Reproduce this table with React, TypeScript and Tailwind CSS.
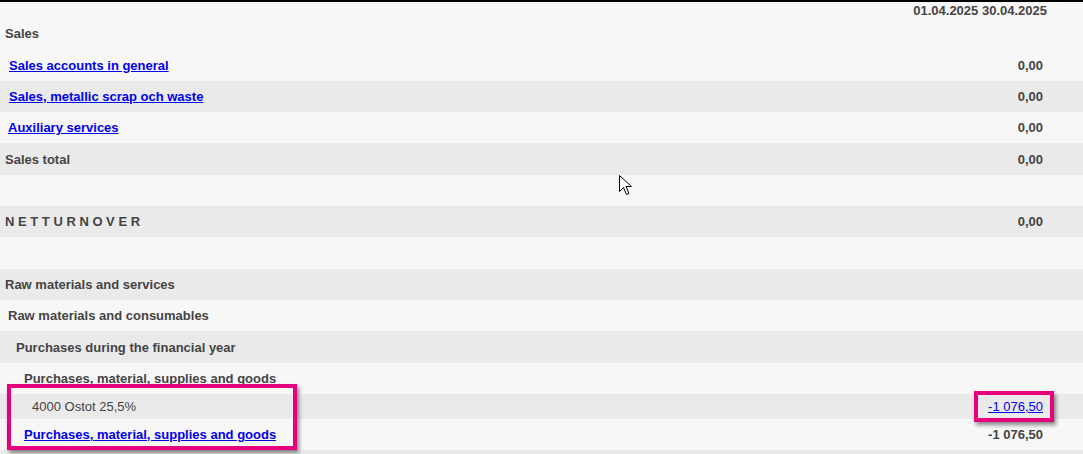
const rows = [
  { label: "Sales", kind: "head", pad: "pl-[5px]", h: "h-[31px]" },
  { label: "Sales accounts in general", kind: "link", pad: "pl-[9px]", value: "0,00", h: "h-[32px]" },
  { label: "Sales, metallic scrap och waste", kind: "link", pad: "pl-[9px]", value: "0,00", h: "h-[31px]" },
  { label: "Auxiliary services", kind: "link", pad: "pl-[8px]", value: "0,00", h: "h-[31px]" },
  { label: "Sales total", kind: "head", pad: "pl-[5px]", value: "0,00", h: "h-[32px]" },
  { label: "", kind: "head", pad: "pl-[5px]", h: "h-[31px]" },
  { label: "N E T T U R N O V E R", kind: "head", pad: "pl-[5px]", value: "0,00", h: "h-[31px]" },
  { label: "", kind: "head", pad: "pl-[5px]", h: "h-[32px]" },
  { label: "Raw materials and services", kind: "head", pad: "pl-[5px]", h: "h-[31px]" },
  { label: "Raw materials and consumables", kind: "head", pad: "pl-[8px]", h: "h-[31px]" },
  { label: "Purchases during the financial year", kind: "head", pad: "pl-[16px]", h: "h-[32px]" },
  { label: "Purchases, material, supplies and goods", kind: "head", pad: "pl-[24px]", h: "h-[31px]" },
];

function Row({ row, index }: { row: (typeof rows)[number]; index: number }) {
  // first row sits on the header's light band, then stripes alternate
  const bg = index === 0 || index % 2 === 1 ? "bg-[#f7f7f7]" : "bg-[#eaeaea]";
  return (
    <div className={`flex items-center justify-between ${row.h} ${bg}`}>
      {row.kind === "link" ? (
        <a href="#" className={`${row.pad} font-bold text-[#0000ee] underline`}>
          {row.label}
        </a>
      ) : (
        <span className={`${row.pad} font-bold text-[#444]`}>{row.label}</span>
      )}
      {row.value && <span className="pr-[40px] font-bold text-[#444]">{row.value}</span>}
    </div>
  );
}

function Cursor() {
  return (
    <svg
      className="absolute left-[619px] top-[175px]"
      width="14"
      height="21"
      viewBox="0 0 14 21"
    >
      <path
        d="M0.5 0.5 L0.5 16.5 L4.5 12.5 L7.5 19.5 L10 18.5 L7 11.5 L12.5 11.5 Z"
        fill="#fff"
        stroke="#000"
        strokeWidth="1"
        strokeLinejoin="miter"
      />
    </svg>
  );
}

export default function App() {
  return (
    <div className="relative h-[454px] w-[1083px] overflow-hidden bg-[#eaeaea] font-['Liberation_Sans',Arial,sans-serif] text-[13px] leading-none">
      <div className="h-[2px] bg-black" />
      <div className="flex h-[16px] items-center justify-end bg-[#f7f7f7] pr-[36px] font-bold text-[#444]">
        01.04.2025 30.04.2025
      </div>

      {rows.map((row, i) => (
        <Row key={i} row={row} index={i} />
      ))}

      {/* account line */}
      <div className="flex h-[25px] items-center justify-between bg-[#eaeaea]">
        <span className="pl-[32px] text-[#444]">4000 Ostot 25,5%</span>
        <a href="#" className="pr-[40px] text-[#0000ee] underline">
          -1 076,50
        </a>
      </div>
      <div className="flex h-[31px] items-center justify-between bg-[#f7f7f7]">
        <a href="#" className="pl-[24px] font-bold text-[#0000ee] underline">
          Purchases, material, supplies and goods
        </a>
        <span className="pr-[40px] font-bold text-[#444]">-1 076,50</span>
      </div>

      {/* highlight boxes */}
      <div className="absolute left-[7px] top-[384px] h-[66px] w-[290px] border-[4px] border-[#e6007e] shadow-[2px_3px_4px_rgba(0,0,0,0.45)]" />
      <div className="absolute left-[974px] top-[391px] h-[31px] w-[80px] border-[4px] border-[#e6007e] shadow-[2px_3px_4px_rgba(0,0,0,0.45)]" />

      <Cursor />
    </div>
  );
}
